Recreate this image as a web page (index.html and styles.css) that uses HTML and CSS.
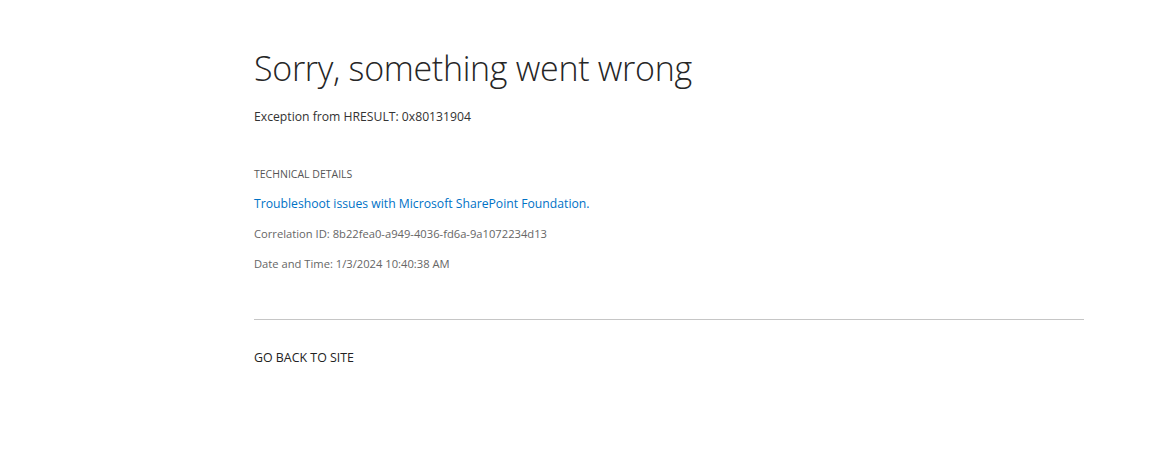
FILE: index.html
```html
<!DOCTYPE html>
<html>
<head>
<meta charset="utf-8">
<title>Error</title>
<link rel="stylesheet" href="styles.css">
</head>
<body>
<div class="page">
  <div class="content">
    <h1 class="title">Sorry, something went wrong</h1>
    <div class="message">Exception from HRESULT: 0x80131904</div>
    <div class="details">
      <div class="details-head">TECHNICAL DETAILS</div>
      <div class="details-link"><a href="#" class="link">Troubleshoot issues with Microsoft SharePoint Foundation.</a></div>
      <div class="details-line">Correlation ID: 8b22fea0-a949-4036-fd6a-9a1072234d13</div>
      <div class="details-line">Date and Time: 1/3/2024 10:40:38 AM</div>
    </div>
    <hr class="rule">
    <div class="back"><a href="#" class="back-link">GO BACK TO SITE</a></div>
  </div>
</div>
</body>
</html>
```

FILE: styles.css
```css
html, body {
  margin: 0;
  padding: 0;
  background: #fff;
}
body {
  font-family: "Open Sans", "Noto Sans", sans-serif;
  color: #444;
}
.page {
  padding-left: 254px;
  padding-right: 83px;
  padding-top: 43px;
}
.content {
  width: 830px;
}
.title {
  margin: 0;
  font-weight: 300;
  font-size: 34px;
  line-height: 50px;
  color: #262626;
  letter-spacing: -0.3px;
}
.message {
  margin-top: 15px;
  font-size: 12.2px;
  line-height: 18px;
  color: #333;
}
.details {
  margin-top: 41px;
}
.details-head {
  font-size: 10.5px;
  line-height: 14px;
  color: #555;
}
.details-link {
  margin-top: 14px;
  font-size: 12.2px;
  line-height: 18px;
}
.link {
  color: #0072c6;
  text-decoration: none;
}
.details-line {
  margin-top: 12px;
  font-size: 11.2px;
  line-height: 18px;
  color: #666;
}
.rule {
  margin: 46px 0 0 0;
  border: 0;
  border-top: 1px solid #c6c6c6;
  height: 0;
}
.back {
  margin-top: 29px;
  font-size: 12.4px;
  line-height: 18px;
}
.back-link {
  color: #222;
  text-decoration: none;
}
```
